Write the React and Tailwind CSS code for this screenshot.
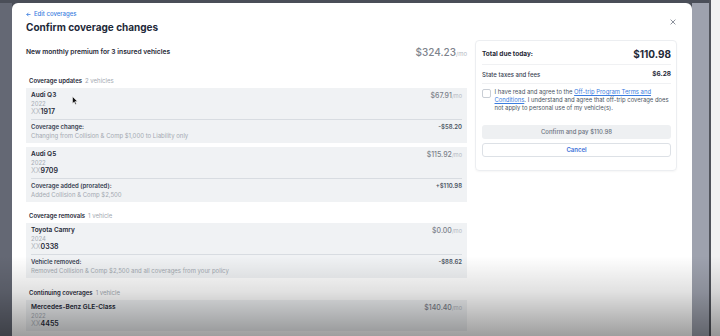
import React from "react";

function Card({ name, year, plate, price, label, detail, amount }) {
  return (
    <div className="bg-[#f0f2f4] px-[5px] pt-[3px] pb-[3px]">
      <div className="flex justify-between">
        <div>
          <div className="text-[6.5px] leading-[9px] font-semibold text-[#1f2937]">{name}</div>
          <div className="text-[6px] leading-[8px] text-[#a7adb5]">{year}</div>
          <div className="text-[7px] leading-[8px]">
            <span className="text-[#b6bbc2]">XX</span>
            <span className="font-semibold text-[#1f2937]">{plate}</span>
          </div>
        </div>
        <div className="text-[7px] leading-[9px] font-medium text-[#7b818a]">
          {price}
          <span className="text-[5.5px] font-normal text-[#b3b8bf]">/mo</span>
        </div>
      </div>
      {label && (
        <>
          <div className="mt-[3px] h-px bg-[#d8dce1]" />
          <div className="pt-[3px] flex justify-between">
            <div>
              <div className="text-[6px] leading-[8px] font-semibold text-[#374151]">{label}</div>
              <div className="mt-[1px] text-[6px] leading-[8px] text-[#a3a9b1]">{detail}</div>
            </div>
            <div className="text-[6px] leading-[8px] font-semibold text-[#4b5563]">{amount}</div>
          </div>
        </>
      )}
    </div>
  );
}

function Section({ title, count, className }) {
  return (
    <div className={"text-[6px] leading-[8px] mb-[3px] pl-[3px] " + className}>
      <span className="font-semibold text-[#1f2937]">{title}</span>
      <span className="ml-[3px] text-[#a3a9b1]">{count}</span>
    </div>
  );
}

export default function App() {
  return (
    <div className="relative w-[720px] h-[336px] overflow-hidden flex bg-[#9ea2ae] font-[Inter,sans-serif]">
      <div className="w-[12px] shrink-0 bg-[#646874] border-t-[3px] border-[#4a4e58]" />
      <div className="w-[680px] shrink-0 pt-[3px] bg-[#4a4e58]">
        <div className="h-full bg-white rounded-t-[6px] pl-[14px] pr-[15px]">
          <div className="flex justify-between pt-[7px]">
            <div>
              <div className="flex items-center gap-[2px] text-[6px] leading-[8px] font-medium text-[#3b7de0]">
                <svg width="5" height="5" viewBox="0 0 10 10" fill="none" stroke="#3b7de0" strokeWidth="1.6">
                  <path d="M9 5H1.5M5 1.5L1.5 5L5 8.5" />
                </svg>
                <span className="ml-[1px]">Edit coverages</span>
              </div>
              <div className="mt-[2px] text-[10px] leading-[14px] font-bold text-[#1e2939]">
                Confirm coverage changes
              </div>
            </div>
            <svg className="mt-[9px] mr-[1px]" width="6" height="6" viewBox="0 0 10 10" stroke="#6b7280" strokeWidth="1.3">
              <path d="M1 1L9 9M9 1L1 9" />
            </svg>
          </div>

          <div className="mt-[6px] flex items-start gap-[8px]">
            <div className="w-[441px] shrink-0">
              <div className="h-[24px] flex items-center justify-between">
                <div className="text-[6.7px] font-semibold text-[#1f2937]">
                  New monthly premium for 3 insured vehicles
                </div>
                <div className="text-[10px] font-medium text-[#7d838c]">
                  $324.23<span className="text-[6px] font-normal text-[#b3b8bf]">/mo</span>
                </div>
              </div>

              <Section title="Coverage updates" count="2 vehicles" className="mt-[13px]" />
              <div className="flex flex-col gap-[4px]">
                <Card
                  name="Audi Q3"
                  year="2022"
                  plate="1917"
                  price="$67.91"
                  label="Coverage change:"
                  detail="Changing from Collision & Comp $1,000 to Liability only"
                  amount="-$58.20"
                />
                <Card
                  name="Audi Q5"
                  year="2022"
                  plate="9709"
                  price="$115.92"
                  label="Coverage added (prorated):"
                  detail="Added Collision & Comp $2,500"
                  amount="+$110.98"
                />
              </div>

              <Section title="Coverage removals" count="1 vehicle" className="mt-[10px]" />
              <Card
                name="Toyota Camry"
                year="2024"
                plate="0338"
                price="$0.00"
                label="Vehicle removed:"
                detail="Removed Collision & Comp $2,500 and all coverages from your policy"
                amount="-$88.62"
              />

              <Section title="Continuing coverages" count="1 vehicle" className="mt-[11px]" />
              <Card name="Mercedes-Benz GLE-Class" year="2022" plate="4455" price="$140.40" />
            </div>

            <div className="w-[202px] shrink-0 border border-[#eceef1] rounded-[4px] pl-[6px] pr-[5px] pb-[13px] shadow-[0_1px_2px_rgba(0,0,0,0.04)]">
              <div className="h-[24px] pt-[4px] flex items-center justify-between border-b border-[#f0f1f3]">
                <span className="text-[6.5px] font-bold text-[#1f2937]">Total due today:</span>
                <span className="text-[10px] font-bold text-[#1f2937]">$110.98</span>
              </div>
              <div className="h-[19px] pt-[1px] flex items-center justify-between border-b border-[#f0f1f3]">
                <span className="text-[6px] font-medium text-[#374151]">State taxes and fees</span>
                <span className="text-[6.5px] font-bold text-[#1f2937]">$6.28</span>
              </div>
              <div className="pt-[4px] flex gap-[4px]">
                <div className="mt-[1px] w-[8.5px] h-[8.5px] shrink-0 rounded-[2px] border border-[#c9ced5] bg-white" />
                <div className="text-[5.9px] leading-[8px] text-[#4b5563] whitespace-nowrap">
                  I have read and agree to the{" "}
                  <span className="text-[#3b7de0] underline">Off-trip Program Terms and</span>
                  <br />
                  <span className="text-[#3b7de0] underline">Conditions</span>. I understand and agree that off-trip coverage does
                  <br />
                  not apply to personal use of my vehicle(s).
                </div>
              </div>
              <div className="mt-[13px] h-[13.5px] rounded-[3px] bg-[#eef0f2] flex items-center justify-center text-[6px] font-medium text-[#6b7280]">
                Confirm and pay $110.98
              </div>
              <div className="mt-[4px] h-[14px] rounded-[3px] border border-[#dde1e6] bg-white flex items-center justify-center text-[6px] font-semibold text-[#3a6fd8]">
                Cancel
              </div>
            </div>
          </div>
        </div>
      </div>
      <div className="w-[17px] shrink-0 bg-[#9ea2ae] border-t-[3px] border-[#4a4e58]" />
      <div className="w-[2px] shrink-0 bg-[#50535b]" />
      <div className="flex-1 bg-[#f1f1f2]" />

      <svg className="absolute left-[72px] top-[96px]" width="6" height="9" viewBox="0 0 6 9">
        <path d="M0.5 0.5V7.5L2.2 5.9L3.4 8.5L4.4 8L3.2 5.5H5.5Z" fill="#111" stroke="#fff" strokeWidth="0.5" />
      </svg>

      <div className="absolute left-0 right-0 bottom-0 h-[80px] bg-linear-to-b from-black/0 via-black/12 via-45% to-black/38 pointer-events-none" />
    </div>
  );
}
